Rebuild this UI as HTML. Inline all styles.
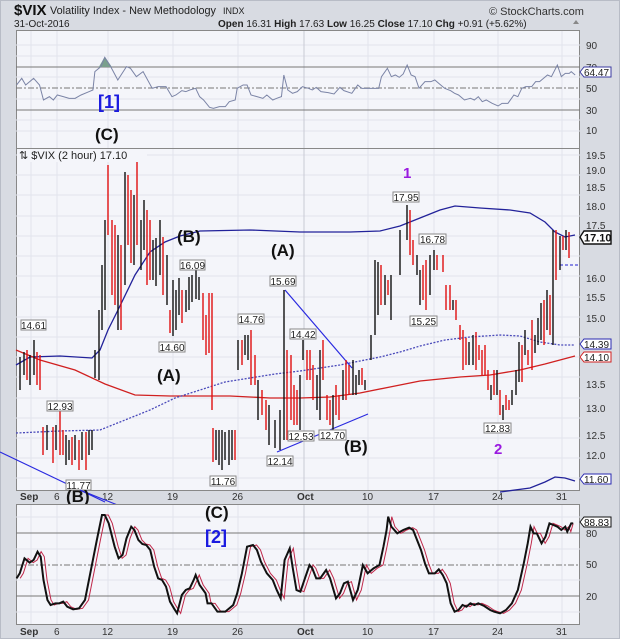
<!DOCTYPE html>
<html><head><meta charset="utf-8"><style>
body{margin:0;background:#d8dbe2;}
svg{display:block;font-family:"Liberation Sans",sans-serif;}
</style></head><body>
<svg width="620" height="639" viewBox="0 0 620 639" xmlns="http://www.w3.org/2000/svg">
<rect width="620" height="639" fill="#d8dbe2"/>
<rect x="0.5" y="0.5" width="619" height="638" fill="none" stroke="#b8bcc6"/>
<!-- header -->
<text x="14" y="15" font-size="15" font-weight="bold" fill="#111">$VIX</text>
<text x="50" y="14" font-size="11" fill="#222" textLength="166" lengthAdjust="spacingAndGlyphs">Volatility Index - New Methodology</text>
<text x="223" y="14" font-size="9" fill="#222">INDX</text>
<text x="14" y="27" font-size="10" fill="#222">31-Oct-2016</text>
<text x="218" y="27" font-size="10" fill="#222"><tspan font-weight="bold">Open</tspan> 16.31 <tspan font-weight="bold">High</tspan> 17.63 <tspan font-weight="bold">Low</tspan> 16.25 <tspan font-weight="bold">Close</tspan> 17.10 <tspan font-weight="bold">Chg</tspan> +0.91 (+5.62%)</text>
<path d="M573 24l3-4 3 4z" fill="#888"/>
<text x="489" y="15" font-size="11" fill="#333">© StockCharts.com</text>

<!-- top RSI panel -->
<rect x="16.5" y="30.5" width="563" height="118" fill="#f4f5fa" stroke="#888"/>
<g stroke="#e2e4ec" stroke-width="1">
<path d="M16 45H580M16 56H580M16 77H580M16 99H580M16 120H580M16 131H580"/>
<path d="M31 31V148M57 31V148M108 31V148M173 31V148M238 31V148M368 31V148M434 31V148M498 31V148M562 31V148"/>
</g>
<path d="M304 31V148" stroke="#c8cad4"/>
<path d="M16 67H580M16 110H580" stroke="#777"/>
<path d="M16 88H580" stroke="#777" stroke-dasharray="6,2,2,2"/>
<g transform="scale(0.3953,0.3333)">
<polygon points="250,201 265,170 283,201" fill="#7aa08c"/>
<polyline fill="none" stroke="#7b84a6" stroke-width="1" vector-effect="non-scaling-stroke" points="42,255 55,235 65,255 85,235 100,255 110,300 125,290 135,300 145,285 160,290 175,295 190,295 205,285 225,275 235,270 240,215 255,200 265,172 280,200 298,240 320,200 330,205 345,230 362,215 385,265 400,260 420,260 435,290 445,285 460,272 470,275 480,270 495,265 505,290 515,300 530,322 540,325 555,320 570,320 580,305 595,300 600,265 615,255 625,255 635,285 650,290 665,295 675,285 690,300 700,295 712,290 718,225 728,270 740,280 752,275 765,260 780,265 790,270 800,262 812,275 830,278 845,282 860,262 870,272 890,280 905,255 915,265 958,265 965,230 980,205 990,230 1000,225 1010,232 1020,222 1030,195 1040,225 1050,230 1060,265 1075,245 1090,245 1100,240 1110,250 1125,265 1140,272 1150,280 1160,285 1175,300 1190,295 1200,300 1210,290 1220,305 1230,300 1245,310 1260,318 1270,310 1285,310 1300,285 1310,290 1320,265 1330,260 1345,260 1355,245 1365,245 1385,225 1395,230 1410,195 1420,230 1430,220 1440,220 1445,215 1455,225"/>
</g>
<g font-size="10" fill="#333">
<text x="586" y="49">90</text><text x="586" y="71">70</text><text x="586" y="92">50</text><text x="586" y="114">30</text><text x="586" y="134">10</text>
</g>
<path d="M580 72l4-5h27v10h-27z" fill="#fff" stroke="#3a3aa0"/>
<text x="584" y="76" font-size="10" fill="#222">64.47</text>
<text x="98" y="108" font-size="18" font-weight="bold" fill="#1a1ae0">[1]</text>
<text x="95" y="140" font-size="17" font-weight="bold" fill="#111">(C)</text>

<!-- main panel -->
<rect x="16.5" y="148.5" width="563" height="342" fill="#f4f5fa" stroke="#888"/>
<g stroke="#e2e4ec" stroke-width="1">
<path d="M16 155H580M16 175H580M16 195H580M16 216H580M16 236H580M16 256H580M16 276H580M16 297H580M16 317H580M16 337H580M16 357H580M16 377H580M16 398H580M16 418H580M16 438H580M16 458H580M16 478H580"/>
<path d="M31 149V490M57 149V490M108 149V490M173 149V490M238 149V490M368 149V490M434 149V490M498 149V490M562 149V490"/>
</g>
<path d="M304 149V490" stroke="#c8cad4"/>
<!-- MAs -->
<polyline fill="none" stroke="#22229a" stroke-width="1.3" points="16,365 30,357 60,356 92,358 100,350 108,330 118,310 135,275 150,252 165,242 180,236 200,231 250,230 300,232 350,232 380,231 400,226 420,218 440,210 455,206 480,208 510,210 530,213 545,222 555,232 565,237 575,235"/>
<polyline fill="none" stroke="#d02020" stroke-width="1.3" points="16,350 40,360 75,370 105,384 135,395 170,396 230,396 270,398 300,398 330,397 360,393 390,387 420,381 460,377 490,375 520,370 545,364 575,356"/>
<polyline fill="none" stroke="#4a4aba" stroke-width="1.3" stroke-dasharray="2,1.5" points="16,433 60,431 100,430 125,420 150,410 175,398 200,390 225,382 250,378 275,374 300,371 320,368 340,365 360,361 380,357 400,352 420,346 445,340 470,337 500,335 520,336 540,342 560,345 575,345"/>
<path d="M560 265H580" stroke="#2020d0" stroke-dasharray="3,2"/>
<polyline fill="none" stroke="#22229a" stroke-width="1.3" points="500,492 530,488 545,482 555,477 565,478 575,481"/>
<!-- trend lines -->
<path d="M0 452L105 502M285 290L352 368M277 452L368 414" stroke="#2a2ae0" stroke-width="1.2"/>
<!-- bars -->
<path fill="none" stroke="#111" stroke-width="1.4" d="M20 357V390M24 352V375M30 355V385M34 340V375M47 425V450M56 425V450M66 435V465M69 440V460M75 435V460M82 432V460M89 430V455M92 430V450M95 350V378M99 310V380M102 265V330M105 220V310M118 235V330M125 172V285M134 195V265M141 220V270M144 200V250M153 240V280M156 238V286M160 220V275M167 255V305M173 280V336M176 290V330M179 278V315M186 290V312M189 277V310M192 275V302M196 265V299M199 277V300M216 430V460M219 430V465M222 430V470M225 432V460M229 430V465M232 430V460M238 340V370M245 335V355M248 335V360M258 380V420M269 405V445M275 420V448M280 410V450M284 290V440M300 375V430M303 340V360M317 375V410M320 350V420M333 395V430M343 370V400M353 360V395M356 375V395M359 370V385M365 380V390M371 335V360M375 260V335M378 262V315M385 275V305M391 275V320M400 230V275M407 205V240M417 255V275M420 270V305M430 255V295M434 250V270M453 300V310M469 342V365M473 335V365M491 385V400M497 370V395M503 405V420M512 390V405M516 370V395M519 342V382M525 330V355M535 335V353M538 318V345M541 303V340M547 290V330M553 230V345M560 236V270M566 230V250"/>
<path fill="none" stroke="#e01010" stroke-width="1.4" d="M27 350V380M37 352V385M40 355V390M43 427V455M53 427V463M60 405V455M63 430V455M72 437V465M79 440V470M86 432V470M108 165V235M112 220V295M115 225V305M121 245V330M128 175V245M131 190V263M137 160V245M147 210V285M150 220V280M163 237V295M170 310V333M182 290V323M203 293V340M206 315V355M209 293V353M212 293V410M213 428V462M235 430V460M242 340V365M251 330V385M255 355V385M262 390V415M266 400V430M287 350V440M291 355V420M294 385V425M297 390V425M307 350V380M310 350V380M313 365V400M323 340V380M327 395V420M330 400V425M336 385V415M339 395V420M346 360V400M349 365V395M362 368V385M381 265V305M388 280V295M410 210V255M413 240V265M423 265V300M426 260V310M437 255V270M443 255V272M446 285V310M450 285V310M456 300V320M460 325V340M463 330V370M466 338V365M476 332V370M479 345V360M482 350V375M485 345V375M488 370V390M494 370V395M500 390V415M506 395V410M509 400V410M522 345V382M528 350V365M532 320V370M544 300V345M550 295V335M556 230V280M563 236V250M569 232V258"/>
<!-- price labels -->
<g font-size="10" fill="#222" text-anchor="middle">
<g fill="#fff" stroke="#888">
<rect x="21" y="320" width="25" height="10"/><rect x="47" y="401" width="26" height="10"/><rect x="66" y="480" width="25" height="10"/><rect x="180" y="260" width="25" height="10"/><rect x="159" y="342" width="26" height="10"/><rect x="210" y="476" width="26" height="10"/><rect x="238" y="314" width="26" height="10"/><rect x="270" y="276" width="26" height="10"/><rect x="290" y="329" width="26" height="10"/><rect x="267" y="456" width="26" height="10"/><rect x="288" y="431" width="26" height="10"/><rect x="319" y="430" width="27" height="10"/><rect x="393" y="192" width="26" height="10"/><rect x="419" y="234" width="27" height="10"/><rect x="410" y="316" width="27" height="10"/><rect x="484" y="423" width="27" height="10"/>
</g>
<text x="33.5" y="329">14.61</text><text x="60" y="410">12.93</text><text x="78.5" y="489">11.77</text><text x="192.5" y="269">16.09</text><text x="172" y="351">14.60</text><text x="223" y="485">11.76</text><text x="251" y="323">14.76</text><text x="283" y="285">15.69</text><text x="303" y="338">14.42</text><text x="280" y="465">12.14</text><text x="301" y="440">12.53</text><text x="332.5" y="439">12.70</text><text x="406" y="201">17.95</text><text x="432.5" y="243">16.78</text><text x="423.5" y="325">15.25</text><text x="497.5" y="432">12.83</text>
</g>
<rect x="17" y="149" width="130" height="13" fill="#f4f5fa"/>
<text x="19" y="159" font-size="11" fill="#222">⇅ $VIX (2 hour) 17.10</text>
<!-- wave labels -->
<g font-size="17" font-weight="bold" fill="#111">
<text x="177" y="242">(B)</text><text x="271" y="256">(A)</text><text x="157" y="381">(A)</text><text x="344" y="452">(B)</text>
</g>
<text x="403" y="178" font-size="15" font-weight="bold" fill="#9a1ae0">1</text>
<text x="494" y="454" font-size="15" font-weight="bold" fill="#9a1ae0">2</text>
<!-- main axis -->
<g font-size="10" fill="#333">
<text x="586" y="159">19.5</text><text x="586" y="174">19.0</text><text x="586" y="191">18.5</text><text x="586" y="210">18.0</text><text x="586" y="229">17.5</text><text x="586" y="282">16.0</text><text x="586" y="301">15.5</text><text x="586" y="322">15.0</text><text x="586" y="388">13.5</text><text x="586" y="412">13.0</text><text x="586" y="439">12.5</text><text x="586" y="459">12.0</text>
</g>
<path d="M580 237l4-6h27v13h-27z" fill="#fff" stroke="#111" stroke-width="1.4"/>
<text x="584" y="241.5" font-size="11" font-weight="bold" fill="#111">17.10</text>
<path d="M580 344l4-5h27v10h-27z" fill="#fff" stroke="#2a2ab0"/>
<text x="584" y="348" font-size="10" fill="#222">14.39</text>
<path d="M580 357l4-5h27v10h-27z" fill="#fff" stroke="#d02020"/>
<text x="584" y="361" font-size="10" fill="#222">14.10</text>
<path d="M580 479l4-5h27v10h-27z" fill="#fff" stroke="#2a2ab0"/>
<text x="584" y="483" font-size="10" fill="#222">11.60</text>
<!-- dates -->
<g font-size="10" fill="#333">
<text x="20" y="500" font-weight="bold">Sep</text><text x="54" y="500">6</text><text x="102" y="500">12</text><text x="167" y="500">19</text><text x="232" y="500">26</text><text x="297" y="500" font-weight="bold">Oct</text><text x="362" y="500">10</text><text x="428" y="500">17</text><text x="492" y="500">24</text><text x="556" y="500">31</text>
</g>
<path d="M80 490L125 508" stroke="#2a2ae0" stroke-width="1.2"/>
<text x="66" y="502" font-size="17" font-weight="bold" fill="#111">(B)</text>

<!-- bottom panel -->
<rect x="16.5" y="504.5" width="563" height="120" fill="#f4f5fa" stroke="#888"/>
<g stroke="#e2e4ec"><path d="M16 517H580M16 549H580M16 580H580M16 612H580M31 505V624M57 505V624M108 505V624M173 505V624M238 505V624M368 505V624M434 505V624M498 505V624M562 505V624"/></g>
<path d="M304 505V624" stroke="#c8cad4"/>
<path d="M16 533H580M16 596H580" stroke="#777"/>
<path d="M16 565H580" stroke="#777" stroke-dasharray="6,2,2,2"/>
<g transform="translate(0,480) scale(0.3953,0.3333)">
<polyline transform="translate(9,0)" fill="none" stroke="#c0284a" stroke-width="1" vector-effect="non-scaling-stroke" points="42,295 50,280 62,235 75,248 85,240 95,215 103,230 110,300 120,360 128,375 140,370 150,370 160,365 170,380 185,388 200,385 215,360 230,270 245,180 258,105 265,105 275,130 290,200 300,235 310,225 320,175 332,140 340,150 350,180 360,192 370,195 380,210 390,260 400,295 410,300 420,320 430,365 440,385 448,400 460,345 470,330 480,325 490,300 495,285 505,315 520,340 525,370 535,370 550,395 570,395 590,375 600,340 612,280 625,200 640,195 650,210 660,245 675,280 690,300 700,330 710,355 720,240 733,205 740,260 750,330 760,335 770,300 783,255 790,265 800,295 810,295 825,270 835,295 850,355 860,340 870,310 880,305 893,360 905,330 918,255 930,280 945,265 960,255 970,200 978,150 982,110 990,140 1005,160 1020,150 1035,143 1045,150 1055,180 1065,210 1075,250 1085,280 1100,280 1110,268 1120,285 1130,310 1140,370 1150,395 1160,390 1170,375 1180,380 1190,370 1200,375 1210,370 1225,378 1240,390 1250,395 1265,400 1280,390 1295,370 1310,330 1325,250 1335,190 1342,140 1350,160 1358,160 1370,190 1380,170 1390,130 1400,135 1410,140 1420,150 1430,140 1435,155 1441,130"/>
<polyline fill="none" stroke="#111" stroke-width="2" vector-effect="non-scaling-stroke" points="42,295 50,280 62,235 75,248 85,240 95,215 103,230 110,300 120,360 128,375 140,370 150,370 160,365 170,380 185,388 200,385 215,360 230,270 245,180 258,105 265,105 275,130 290,200 300,235 310,225 320,175 332,140 340,150 350,180 360,192 370,195 380,210 390,260 400,295 410,300 420,320 430,365 440,385 448,400 460,345 470,330 480,325 490,300 495,285 505,315 520,340 525,370 535,370 550,395 570,395 590,375 600,340 612,280 625,200 640,195 650,210 660,245 675,280 690,300 700,330 710,355 720,240 733,205 740,260 750,330 760,335 770,300 783,255 790,265 800,295 810,295 825,270 835,295 850,355 860,340 870,310 880,305 893,360 905,330 918,255 930,280 945,265 960,255 970,200 978,150 982,110 990,140 1005,160 1020,150 1035,143 1045,150 1055,180 1065,210 1075,250 1085,280 1100,280 1110,268 1120,285 1130,310 1140,370 1150,395 1160,390 1170,375 1180,380 1190,370 1200,375 1210,370 1225,378 1240,390 1250,395 1265,400 1280,390 1295,370 1310,330 1325,250 1335,190 1342,140 1350,160 1358,160 1370,190 1380,170 1390,130 1400,135 1410,140 1420,150 1430,140 1435,155 1445,130 1450,130"/>
</g>
<g font-size="10" fill="#333"><text x="586" y="537">80</text><text x="586" y="568">50</text><text x="586" y="600">20</text></g>
<path d="M580 522l4-5h27v10h-27z" fill="#fff" stroke="#111"/>
<text x="584" y="526" font-size="10" fill="#111">88.83</text>
<text x="205" y="518" font-size="17" font-weight="bold" fill="#111">(C)</text>
<text x="205" y="543" font-size="18" font-weight="bold" fill="#1a1ae0">[2]</text>
<g font-size="10" fill="#333">
<text x="20" y="635" font-weight="bold">Sep</text><text x="54" y="635">6</text><text x="102" y="635">12</text><text x="167" y="635">19</text><text x="232" y="635">26</text><text x="297" y="635" font-weight="bold">Oct</text><text x="362" y="635">10</text><text x="428" y="635">17</text><text x="492" y="635">24</text><text x="556" y="635">31</text>
</g>
</svg>
</body></html>
